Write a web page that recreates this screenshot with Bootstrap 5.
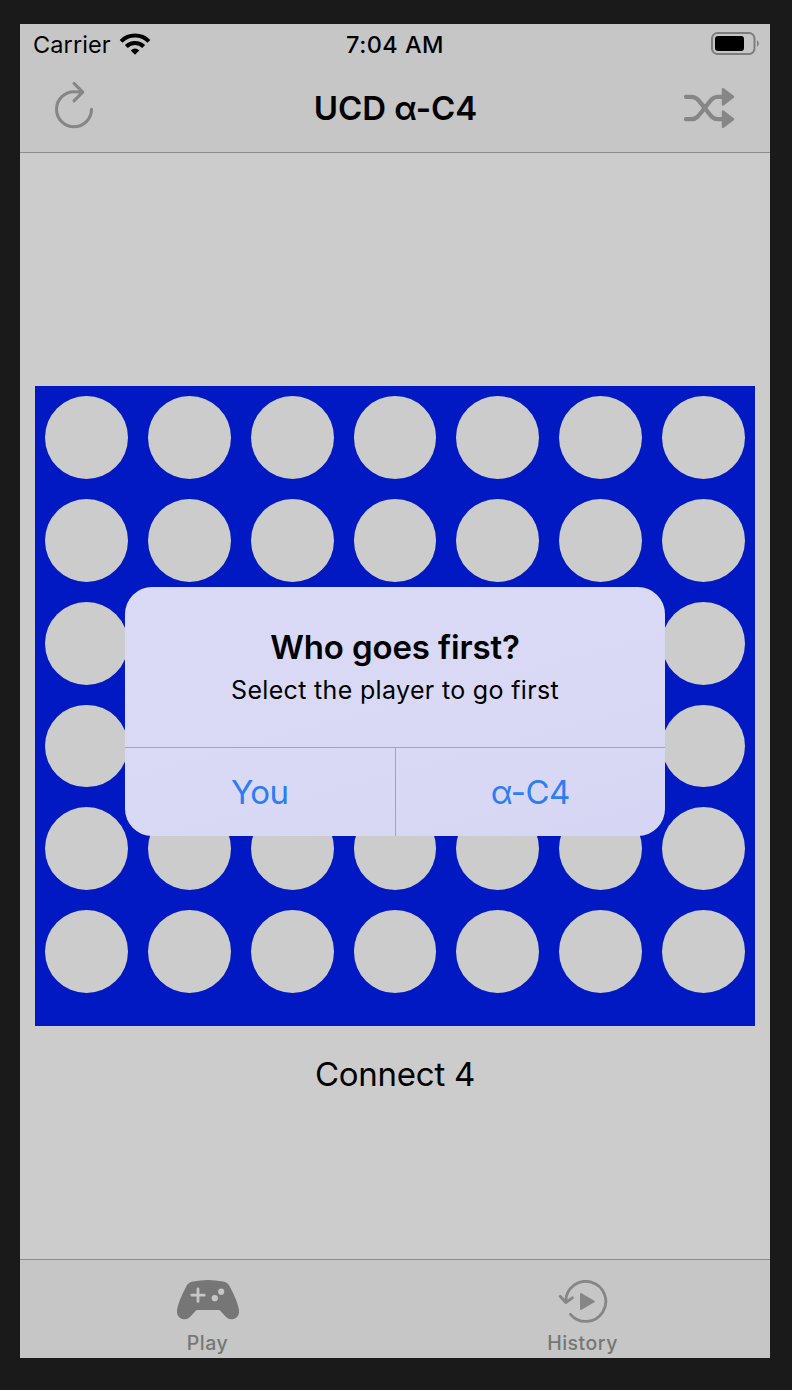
<!DOCTYPE html>
<html lang="en">
<head>
<meta charset="utf-8">
<meta name="viewport" content="width=device-width, initial-scale=1">
<title>UCD α-C4</title>
<link href="https://cdn.jsdelivr.net/npm/bootstrap@5.3.0/dist/css/bootstrap.min.css" rel="stylesheet">
<style>
body{background:#1a1a1a;font-family:Inter,"Liberation Sans",sans-serif;color:#000;height:1390px;overflow:hidden}
.phone{width:750px;height:1334px;margin:24px 0 0 20px;background:#ccc}
.phone svg{display:block;flex:none}
.status{display:grid;grid-template-columns:1fr auto 1fr;align-items:center;height:40px;font-size:23.5px;line-height:38px}
.status span{padding-top:2px}
.carrier{padding-left:13px;letter-spacing:.1px}
.clock{font-weight:500;letter-spacing:.45px}
.topbar{background:#c6c6c6;height:129px;border-bottom:1px solid #8d8d8d}
.titlebar{height:88px;padding:0 35px 0 26px}
.titlebar h1{font-size:33px;font-weight:600;line-height:40px;margin:0 0 0 5px}
.icon-btn{border:0;background:none;padding:0}
.restart{padding-bottom:3px}
.content{height:1106px;padding:233px 15px 0}
.board{width:720px;height:640px;background:#0019c3;display:grid;grid-template-columns:repeat(7,1fr);grid-auto-rows:102.857px}
.slot{margin:10px;border-radius:50%;background:#ccc}
.caption{font-size:33px;line-height:40px;margin-top:28px;letter-spacing:-.25px}
.tabs{height:99px;background:#c6c6c6;border-top:1px solid #8d8d8d;color:#767676}
.tabs a{color:inherit;text-decoration:none;font-size:19.5px;font-weight:500;line-height:24px;padding:20px 0 3px;letter-spacing:.5px}
.alert-box{position:absolute;left:125px;top:587px;width:540px;height:249px;border-radius:27px;background:linear-gradient(165deg,#dadaf6,#d9d9f5 60%,#d6d6f4);overflow:hidden}
.alert-text{height:160px;padding-top:40px}
.alert-text h2{font-size:33px;font-weight:600;line-height:40px;margin:0;letter-spacing:-.12px}
.alert-text p{font-size:25px;line-height:32px;margin:7px 0 0;letter-spacing:.33px}
.actions{height:89px;border-top:1px solid #a0a0d0}
.actions button{flex:1 1 0;border:0;background:none;color:#2c7cf6;font-size:33px;line-height:40px;padding:0;letter-spacing:-.5px}
.actions button+button{border-left:1px solid #a0a0d0}
</style>
</head>
<body>
<main class="phone">
  <header class="topbar">
    <div class="status">
      <div class="carrier d-flex align-items-center"><span>Carrier</span>
        <svg class="ms-2" width="32" height="24" viewBox="118.5 32 32 24" fill="none" stroke="#000" stroke-width="4"><path d="M120.6 41.3a19.7 19.7 0 0 1 27.8 0M125.8 46.5a12.3 12.3 0 0 1 17.4 0"/><path d="M134.5 54.8l-4.3-4.4q4.3-3.6 8.6 0z" fill="#000" stroke="none"/></svg>
      </div>
      <div class="clock d-flex"><span>7:04 AM</span></div>
      <div class="d-flex justify-content-end pe-2">
        <svg width="52" height="26" viewBox="710 31 52 26"><rect x="712" y="33" width="42.5" height="21" rx="5.5" fill="none" stroke="#7d7d7d" stroke-width="2"/><rect x="715" y="36" width="29" height="15" rx="3"/><path d="M757 40q3.6 3.5 0 7z" fill="#7d7d7d"/></svg>
      </div>
    </div>
    <div class="titlebar d-flex align-items-center justify-content-between">
      <button class="icon-btn restart" aria-label="Restart"><svg width="56" height="56" viewBox="0 18 512 512" fill="none" stroke="#868686" stroke-width="28" stroke-linecap="round" stroke-linejoin="round"><path d="M320 146s24.36-12-64-12a160 160 0 1 0 160 160M256 58l80 80-80 80"/></svg></button>
      <h1>UCD α-C4</h1>
      <button class="icon-btn" aria-label="Shuffle"><svg width="51" height="42" viewBox="684 87 51 42" fill="none" stroke="#868686" stroke-width="4.2" stroke-linecap="round" stroke-linejoin="round"><path d="M686 96.800h6c4 0 6 2.500 12.700 11.200S713 119.200 717.500 119.200h6M686 119.200h6c4 0 6-2.500 12.700-11.200S713 96.800 717.500 96.800h6"/><path d="M723 89.200l10 7.600-10 7.600zM723 111.600l10 7.600-10 7.600z" fill="#868686" stroke-width="2.500"/></svg></button>
    </div>
  </header>
  <section class="content">
    <div class="board" id="board"></div>
    <div class="caption text-center">Connect 4</div>
  </section>
  <nav class="tabs d-flex">
    <a href="#" class="col-6 d-flex flex-column align-items-center">
      <svg width="62" height="40" viewBox="0 0 62 40"><path fill="#767676" d="M16 1.600Q31-1.400 46 1.600C50 2.400 51.500 4 53 7Q60.500 21 62 30C62.800 35 59.500 39.200 54.500 39.200C51.500 39.200 49.500 37.800 47.500 35.500L43.800 31.200Q42.800 30 41.500 30H20.500Q19.200 30 18.200 31.200L14.500 35.500C12.500 37.800 10.500 39.200 7.500 39.200C2.500 39.200-.8 35 0 30Q1.500 21 9 7C10.500 4 12 2.400 16 1.600Z"/><path d="M14.800 15.200h12.400M21 9v12.400" stroke="#c6c6c6" stroke-width="2.800" stroke-linecap="round"/><circle cx="44.200" cy="11.700" r="3.100" fill="#c6c6c6"/><circle cx="37.800" cy="18.200" r="3.100" fill="#c6c6c6"/></svg>
      <span class="mt-auto">Play</span></a>
    <a href="#" class="col-6 d-flex flex-column align-items-center">
      <svg width="50" height="44" viewBox="558 1280 50 44" fill="none" stroke="#868686" stroke-width="2.800" stroke-linecap="round" stroke-linejoin="round"><path d="M565.800 1302A20 20 0 1 1 570.500 1314.300M560.200 1296.300l5.600 6.200 6.500-4.700"/><path d="M581 1294l12.800 7.500-12.800 7.500z" fill="#868686" stroke-width="2"/></svg>
      <span class="mt-auto">History</span></a>
  </nav>
</main>
<div class="alert-box" role="dialog" aria-label="Who goes first?">
  <div class="alert-text text-center"><h2>Who goes first?</h2><p>Select the player to go first</p></div>
  <div class="actions d-flex"><button>You</button><button>α-C4</button></div>
</div>
<script>
document.getElementById('board').innerHTML='<div class="slot"></div>'.repeat(42);
</script>
<script src="https://cdn.jsdelivr.net/npm/bootstrap@5.3.0/dist/js/bootstrap.bundle.min.js"></script>
</body>
</html>
